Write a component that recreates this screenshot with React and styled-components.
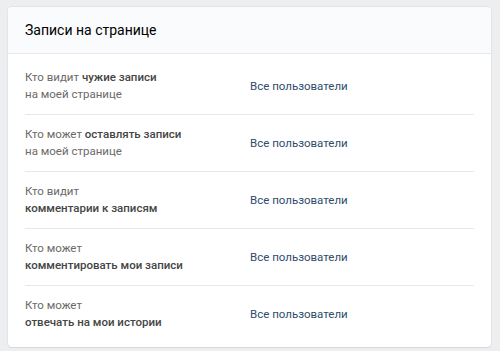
import React from "react";
import styled, { createGlobalStyle } from "styled-components";

const GlobalStyle = createGlobalStyle`
	html, body {
		margin: 0;
		padding: 0;
		background: #edeef0;
	}
	body {
		font-family: Roboto, "Open Sans", "DejaVu Sans", sans-serif;
	}
`;

const Page = styled.div`
	padding: 7px 9px 7px 8px;
`;

const Card = styled.section`
	background: #fff;
	border-radius: 4px;
	box-shadow: 0 1px 0 0 #d7d8db, 0 0 0 1px #e3e4e8;
	overflow: hidden;
`;

const Header = styled.header`
	display: flex;
	align-items: center;
	height: 46px;
	padding: 0 17px;
	background: #fafbfc;
	border-bottom: 1px solid #e7e8ec;
	font-size: 14px;
	color: #000;
`;

const Body = styled.div`
	padding: 4px 17px 5px 17px;
`;

const Row = styled.div`
	display: flex;
	align-items: center;
	padding: 11px 0;
	border-bottom: 1px solid #e7e8ec;
	font-size: 11.5px;
	line-height: 17px;

	&:last-child {
		border-bottom: 0;
	}
`;

const Label = styled.div`
	width: 225px;
	color: #6a6a6a;

	b {
		font-weight: 500;
		color: #454545;
	}
`;

const Value = styled.div`
	color: #2f4c6d;
`;

const rows = [
	{ pre: "Кто видит ", bold: "чужие записи", post: "на моей странице" },
	{ pre: "Кто может ", bold: "оставлять записи", post: "на моей странице" },
	{ pre: "Кто видит", bold: "комментарии к записям", second: true },
	{ pre: "Кто может", bold: "комментировать мои записи", second: true },
	{ pre: "Кто может", bold: "отвечать на мои истории", second: true },
];

export default function App() {
	return (
		<>
			<GlobalStyle />
			<Page>
				<Card>
					<Header>Записи на странице</Header>
					<Body>
						{rows.map((r, i) => (
							<Row key={i}>
								<Label>
									{r.second ? (
										<>
											{r.pre}
											<br />
											<b>{r.bold}</b>
										</>
									) : (
										<>
											{r.pre}
											<b>{r.bold}</b>
											<br />
											{r.post}
										</>
									)}
								</Label>
								<Value>Все пользователи</Value>
							</Row>
						))}
					</Body>
				</Card>
			</Page>
		</>
	);
}
